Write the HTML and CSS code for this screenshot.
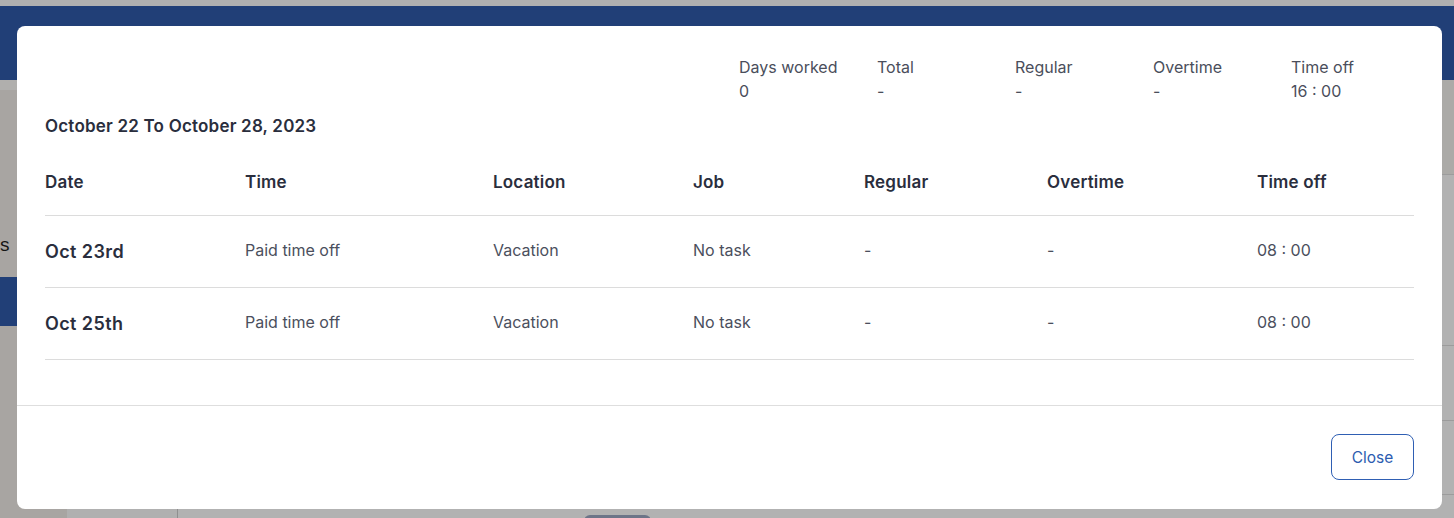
FILE: index.html
```html
<!DOCTYPE html>
<html lang="en">
<head>
<meta charset="utf-8">
<title>Timesheet week</title>
<link rel="stylesheet" href="styles.css">
</head>
<body>
<div class="backdrop">
  <div class="topstrip"></div>
  <div class="appbar"></div>
  <div class="app-body">
    <div class="sidebar">
      <div class="side-top"></div>
      <div class="side-item"><span class="side-label">s</span></div>
      <div class="side-active"></div>
    </div>
    <div class="content">
      <div class="content-left"></div>
      <div class="content-main">
        <div class="right-rows">
          <div class="rrow r1"></div>
          <div class="rrow r2"></div>
          <div class="rrow r3"></div>
          <div class="rrow r4"></div>
        </div>
        <div class="pill"></div>
      </div>
    </div>
  </div>
</div>

<div class="modal">
  <div class="modal-body">
    <div class="summary">
      <div class="stat"><div>Days worked</div><div>0</div></div>
      <div class="stat"><div>Total</div><div>-</div></div>
      <div class="stat"><div>Regular</div><div>-</div></div>
      <div class="stat"><div>Overtime</div><div>-</div></div>
      <div class="stat last"><div>Time off</div><div>16 : 00</div></div>
    </div>
    <div class="title">October 22 To October 28, 2023</div>
    <div class="table">
      <div class="trow thead">
        <div>Date</div><div>Time</div><div>Location</div><div>Job</div><div>Regular</div><div>Overtime</div><div>Time off</div>
      </div>
      <div class="trow">
        <div class="cell-date">Oct 23rd</div><div>Paid time off</div><div>Vacation</div><div>No task</div><div>-</div><div>-</div><div>08 : 00</div>
      </div>
      <div class="trow">
        <div class="cell-date">Oct 25th</div><div>Paid time off</div><div>Vacation</div><div>No task</div><div>-</div><div>-</div><div>08 : 00</div>
      </div>
    </div>
  </div>
  <div class="modal-footer">
    <button class="btn-close">Close</button>
  </div>
</div>
</body>
</html>
```
FILE: styles.css
```css
* { box-sizing: border-box; }
html, body { margin: 0; padding: 0; }
body {
  width: 1454px;
  height: 518px;
  overflow: hidden;
  background: #b1b1b1;
  font-family: Inter, "Noto Sans", sans-serif;
  position: relative;
}
.backdrop { display: flex; flex-direction: column; height: 518px; }
.topstrip { height: 6px; background: #b0b0b0; }
.appbar { height: 74px; background: #213f77; }
.app-body { flex: 1; display: flex; }
.sidebar { width: 67px; background: #a8a5a2; display: flex; flex-direction: column; overflow: hidden; }
.side-top { height: 10px; background: #b0afad; }
.side-item { height: 187px; display: flex; align-items: flex-end; padding: 0 0 20px 0; }
.side-label { font-family: "Liberation Sans", Arial, sans-serif; font-size: 19px; line-height: 24px; color: #151515; }
.side-active { height: 49px; background: #213f77; width: 67px; }
.content { flex: 1; display: flex; }
.content-left { width: 111px; background: #b0b0b0; border-right: 1px solid #8f8f8f; }
.content-main { flex: 1; position: relative; background: #b2b2b2; }
.right-rows { display: flex; flex-direction: column; }
.rrow { border-bottom: 1px solid #9c9c9c; }
.r1 { height: 95px; background: #abaaa7; }
.r2 { height: 171px; }
.r3 { height: 75px; }
.r4 { height: 74px; }
.pill { position: absolute; left: 406px; top: 435px; width: 67px; height: 12px; border-radius: 6px; background: #6d7588; }

.modal {
  position: absolute;
  left: 17px;
  top: 26px;
  width: 1425px;
  height: 483px;
  background: #fff;
  border-radius: 8px;
  display: flex;
  flex-direction: column;
}
.modal-body { padding: 29px 28px 0 28px; border-bottom: 1px solid #dedede; }
.summary { display: flex; justify-content: flex-end; font-size: 16px; line-height: 24px; color: #4a4e5b; }
.stat { width: 138px; white-space: nowrap; }
.stat.last { width: 123px; }
.title { margin-top: 11px; font-size: 17px; letter-spacing: 0.2px; font-weight: 600; line-height: 24px; color: #2a2e3d; }
.table { margin-top: 32px; padding-bottom: 45px; }
.trow {
  display: grid;
  grid-template-columns: 200px 248px 200px 171px 183px 210px 1fr;
  align-items: center;
  height: 72px;
  padding-bottom: 4px;
  border-bottom: 1px solid #dcdcdc;
  font-size: 16px;
  color: #4b4f5d;
}
.trow.thead { height: 46px; padding-bottom: 0; align-items: flex-start; font-size: 17px; letter-spacing: 0.2px; font-weight: 600; color: #2a2e3d; line-height: 24px; }
.cell-date { font-size: 18px; letter-spacing: 0.4px; font-weight: 600; color: #2a2e3d; padding-top: 3px; }
.modal-footer { flex: 1; display: flex; justify-content: flex-end; align-items: flex-start; padding: 28px 28px 0 0; }
.btn-close {
  width: 83px;
  height: 46px;
  background: #fff;
  border: 1px solid #2f5fb3;
  border-radius: 8px;
  color: #2c5cb0;
  font-family: Inter, "Noto Sans", sans-serif;
  font-size: 15.5px;
  padding: 0;
}
```
